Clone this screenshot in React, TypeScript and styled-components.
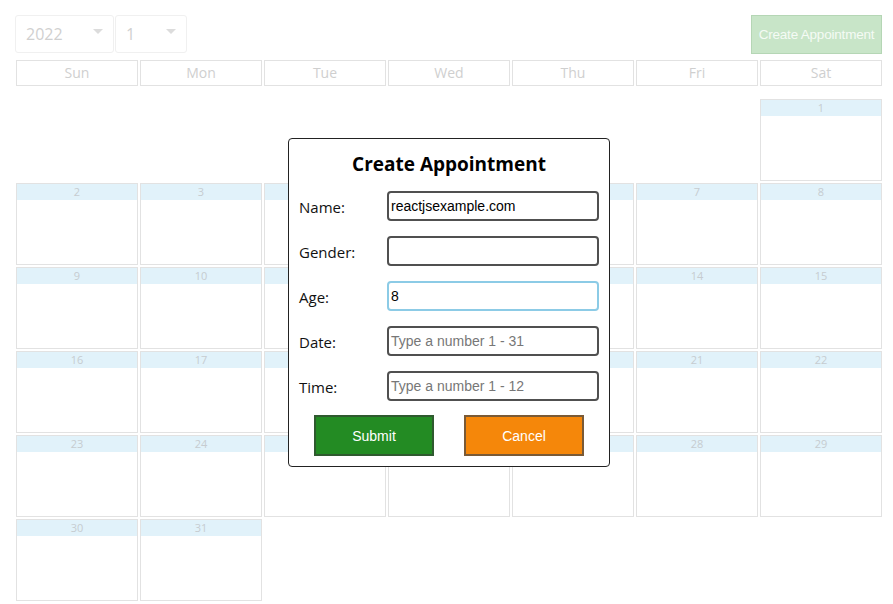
import React from 'react';
import styled, { createGlobalStyle } from 'styled-components';

const GlobalStyle = createGlobalStyle`
  body {
    margin: 0;
    background: #fff;
    font-family: 'Open Sans', 'Noto Sans', sans-serif;
  }
`;

const Page = styled.div`
  position: relative;
  width: 893px;
  height: 604px;
  padding: 15px 11px 0 16px;
  box-sizing: border-box;
  overflow: hidden;
`;

const TopBar = styled.div`
  display: flex;
  justify-content: space-between;
  align-items: center;
  height: 38px;
  margin-left: -1px;
`;

const Selects = styled.div`
  display: flex;
  height: 38px;
`;

const Select = styled.div<{ $w: number }>`
  width: ${p => p.$w}px;
  height: 38px;
  box-sizing: border-box;
  border: 1px solid #f0f0f0;
  border-radius: 3px;
  display: flex;
  align-items: center;
  justify-content: space-between;
  padding: 0 10px;
  color: #d0d0d0;
  font-size: 16px;
  & + & {
    margin-left: 1px;
  }
`;

const Caret = styled.span`
  width: 0;
  height: 0;
  border-left: 5px solid transparent;
  border-right: 5px solid transparent;
  border-top: 5px solid #dcdcdc;
  margin-top: -6px;
`;

const CreateButton = styled.div`
  width: 131px;
  height: 39px;
  box-sizing: border-box;
  background: #c8e5c8;
  border: 1px solid #b5d6b5;
  color: #f5fbf5;
  font-family: 'Liberation Sans', Arial, sans-serif;
  font-size: 13.5px;
  letter-spacing: -0.2px;
  display: flex;
  align-items: center;
  justify-content: center;
  white-space: nowrap;
`;

const Grid = styled.div`
  display: grid;
  grid-template-columns: repeat(7, 122px);
  column-gap: 2px;
`;

const WeekHeader = styled(Grid)`
  margin-top: 7px;
`;

const WeekDay = styled.div`
  height: 26px;
  box-sizing: border-box;
  border: 1px solid #e2e2e2;
  color: #cfcfcf;
  font-size: 14px;
  display: flex;
  align-items: center;
  justify-content: center;
  padding-bottom: 2px;
`;

const Days = styled(Grid)`
  margin-top: 13px;
  row-gap: 2px;
`;

const DayCell = styled.div`
  height: 82px;
  box-sizing: border-box;
  border: 1px solid #e2e2e2;
  background: #fff;
`;

const DayStrip = styled.div`
  height: 16px;
  background: #e1f2fa;
  color: #c6ccd0;
  font-size: 11px;
  line-height: 16px;
  text-align: center;
`;

const Modal = styled.div`
  position: absolute;
  left: 288px;
  top: 138px;
  width: 322px;
  height: 329px;
  box-sizing: border-box;
  background: #fff;
  border: 1px solid #222;
  border-radius: 4px;
  padding: 12px 10px 0 10px;
`;

const Title = styled.h2`
  margin: 0 0 14px;
  text-align: center;
  font-size: 19px;
  font-weight: 700;
  color: #000;
  line-height: 26px;
`;

const Field = styled.div`
  display: flex;
  align-items: center;
  height: 30px;
  margin-bottom: 15px;
`;

const Label = styled.label`
  width: 88px;
  font-size: 15px;
  line-height: 20px;
  color: #111;
  margin-top: 1px;
`;

const Input = styled.div<{ $focus?: boolean; $placeholder?: boolean }>`
  width: 212px;
  height: 30px;
  box-sizing: border-box;
  border: 2px solid ${p => (p.$focus ? '#8ccbe6' : '#505050')};
  border-radius: 4px;
  padding: 0 2px;
  display: flex;
  align-items: center;
  font-family: 'Liberation Sans', Arial, sans-serif;
  font-size: 14px;
  color: ${p => (p.$placeholder ? '#777' : '#000')};
`;

const Buttons = styled.div`
  display: flex;
  justify-content: center;
  gap: 30px;
  margin-top: -1px;
`;

const ActionButton = styled.div<{ $bg: string; $border: string }>`
  width: 120px;
  height: 41px;
  box-sizing: border-box;
  background: ${p => p.$bg};
  border: 2px solid ${p => p.$border};
  color: #fff;
  font-family: 'Liberation Sans', Arial, sans-serif;
  font-size: 14px;
  display: flex;
  align-items: center;
  justify-content: center;
`;

const weekDays = ['Sun', 'Mon', 'Tue', 'Wed', 'Thu', 'Fri', 'Sat'];

export default function App(): JSX.Element {
  const days = Array.from({ length: 31 }, (_, i) => i + 1);

  return (
    <Page>
      <GlobalStyle />
      <TopBar>
        <Selects>
          <Select $w={99}>
            2022 <Caret />
          </Select>
          <Select $w={72}>
            1 <Caret />
          </Select>
        </Selects>
        <CreateButton>Create Appointment</CreateButton>
      </TopBar>

      <WeekHeader>
        {weekDays.map(d => (
          <WeekDay key={d}>{d}</WeekDay>
        ))}
      </WeekHeader>

      <Days>
        {Array.from({ length: 6 }, (_, i) => (
          <div key={`blank-${i}`} />
        ))}
        {days.map(d => (
          <DayCell key={d}>
            <DayStrip>{d}</DayStrip>
          </DayCell>
        ))}
      </Days>

      <Modal>
        <Title>Create Appointment</Title>
        <Field>
          <Label>Name:</Label>
          <Input>reactjsexample.com</Input>
        </Field>
        <Field>
          <Label>Gender:</Label>
          <Input />
        </Field>
        <Field>
          <Label>Age:</Label>
          <Input $focus>8</Input>
        </Field>
        <Field>
          <Label>Date:</Label>
          <Input $placeholder>Type a number 1 - 31</Input>
        </Field>
        <Field>
          <Label>Time:</Label>
          <Input $placeholder>Type a number 1 - 12</Input>
        </Field>
        <Buttons>
          <ActionButton $bg="#238b23" $border="#2f5a2f">Submit</ActionButton>
          <ActionButton $bg="#f5870a" $border="#7a5a36">Cancel</ActionButton>
        </Buttons>
      </Modal>
    </Page>
  );
}
